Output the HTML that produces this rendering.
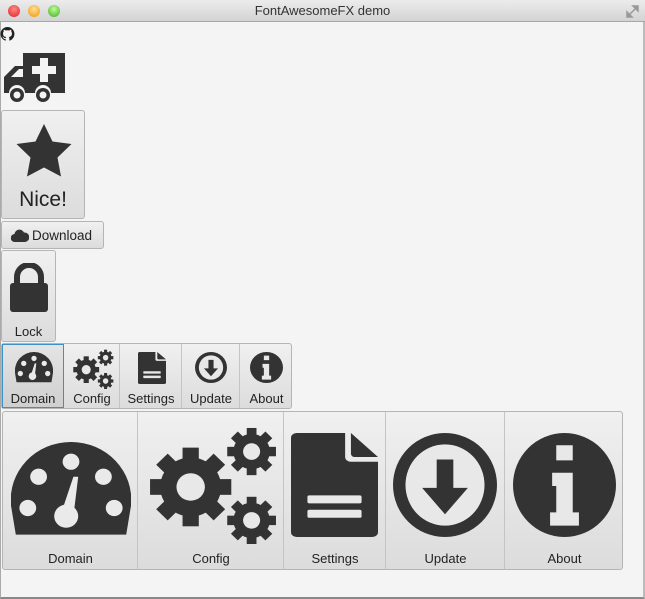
<!DOCTYPE html>
<html><head><style>
*{margin:0;padding:0;box-sizing:border-box}
body{width:645px;height:599px;background:#f4f4f4;font-family:"Liberation Sans",sans-serif;position:relative;overflow:hidden;color:#222}
.tb{position:absolute;left:0;top:0;width:645px;height:22px;background:linear-gradient(#ececec,#d3d3d3);border-bottom:1px solid #a8a8a8;text-align:center;font-size:13px;line-height:22px;color:#333}
.dot{position:absolute;top:5px;width:12px;height:12px;border-radius:50%}
.frame{position:absolute;left:0;top:22px;width:645px;height:577px;border-left:1px solid #aaa;border-right:2px solid #bbb;border-bottom:2px solid #888}
.b{position:absolute;background:linear-gradient(#f0f0f0,#dcdcdc);border:1px solid #b5b5b5;border-radius:3px;text-align:center;font-size:12px}
.lbl{position:absolute;left:0;right:0;text-align:center}
.cell{position:absolute;top:0;bottom:0;border-right:1px solid #c4c4c4}
svg{position:absolute}
</style></head><body>
<svg width="0" height="0" style="position:absolute"><defs>
<g id="cog"><circle r="30" fill="#333"/><g fill="#333"><rect x="-8" y="-40" width="16" height="80"/><rect x="-8" y="-40" width="16" height="80" transform="rotate(45)"/><rect x="-8" y="-40" width="16" height="80" transform="rotate(90)"/><rect x="-8" y="-40" width="16" height="80" transform="rotate(135)"/></g><circle r="14" fill="#e8e8e8"/></g>
<g id="gear"><use href="#cog" transform="translate(44,62)"/><use href="#cog" transform="translate(104,26) scale(.6)"/><use href="#cog" transform="translate(104,96) scale(.6)"/></g>
<g id="doc"><path fill="#333" d="M6 0h50v30a6 6 0 0 0 6 6h28v88a6 6 0 0 1-6 6H6a6 6 0 0 1-6-6V6a6 6 0 0 1 6-6z M62 0l28 30H66a4 4 0 0 1-4-4z"/><rect x="17" y="78" width="56" height="10" rx="2" fill="#e8e8e8"/><rect x="17" y="96" width="56" height="10" rx="2" fill="#e8e8e8"/></g>
<g id="dl"><ellipse cx="50" cy="55" rx="50" ry="55" fill="#333"/><ellipse cx="50" cy="55" rx="38" ry="43" fill="#e8e8e8"/><path fill="#333" d="M42 28h16v30h14L50 86 28 58h14z"/></g>
<g id="info"><ellipse cx="50" cy="55" rx="50" ry="55" fill="#333"/><path fill="#e8e8e8" d="M42 13h16v16H42z M38 42h20v42h6v14H36V84h6V56h-4z"/></g>
<g id="gauge"><path fill="#333" d="M50 0a50 50 0 0 1 50 55l-4 25H4L0 55A50 50 0 0 1 50 0z"/><g fill="#eaeaea"><circle cx="50" cy="17" r="7"/><circle cx="23" cy="30" r="7"/><circle cx="77" cy="30" r="7"/><circle cx="14" cy="57" r="7"/><circle cx="86" cy="57" r="7"/><circle cx="46" cy="64" r="10"/><path d="M41 64L52 30h4l-4 34z"/></g></g>
</defs></svg>
<div class="tb">FontAwesomeFX demo
<div class="dot" style="left:8px;background:radial-gradient(circle at 50% 35%,#f88,#d22)"></div>
<div class="dot" style="left:28px;background:radial-gradient(circle at 50% 35%,#fd9,#e90)"></div>
<div class="dot" style="left:48px;background:radial-gradient(circle at 50% 35%,#bf9,#4a2)"></div>
<svg style="left:626px;top:5px" width="13" height="13" viewBox="0 0 13 13"><path d="M7 1h5v5zM6 12H1V7z M4 9l5-5" stroke="#999" fill="#999" stroke-width="1.5"/></svg>
</div>
<div class="frame"></div>
<svg style="left:0;top:27px" width="15" height="14" viewBox="0 0 16 16"><path fill="#222" d="M8 0a8 8 0 0 0-2.5 15.6c.4 0 .5-.2.5-.4v-1.5c-2.2.5-2.7-1-2.7-1-.4-.9-.9-1.2-.9-1.2-.7-.5.1-.5.1-.5.8.1 1.2.8 1.2.8.7 1.3 1.9.9 2.3.7.1-.5.3-.9.5-1.1-1.8-.2-3.6-.9-3.6-4 0-.9.3-1.6.8-2.1-.1-.2-.4-1 .1-2.1 0 0 .7-.2 2.2.8a7.5 7.5 0 0 1 4 0c1.5-1 2.2-.8 2.2-.8.4 1.1.2 1.9.1 2.1.5.6.8 1.3.8 2.1 0 3.1-1.9 3.8-3.6 4 .3.3.6.8.6 1.5v2.2c0 .2.1.5.6.4A8 8 0 0 0 8 0z"/></svg>
<svg style="left:3px;top:51px" width="64" height="53" viewBox="0 0 64 53"><path fill="#333" d="M20 2h42v40H48a8 8 0 0 0-16 0H22a8 8 0 0 0-16 0H1V26L12 15h8z"/><path fill="#f4f4f4" d="M8 26l8-8h4v8z"/><path fill="#f4f4f4" d="M37 7h8v8h8v8h-8v8h-8v-8h-8v-8h8z"/><circle cx="14" cy="44" r="7" fill="#333"/><circle cx="14" cy="44" r="3.5" fill="#f4f4f4"/><circle cx="40" cy="44" r="7" fill="#333"/><circle cx="40" cy="44" r="3.5" fill="#f4f4f4"/></svg>
<div class="b" style="left:1px;top:110px;width:84px;height:109px">
<svg style="left:12px;top:12px" width="60" height="56" viewBox="0 0 60 56"><path fill="#333" d="M30 1l8.5 17.5 19 2.5-14 13.5 3.5 19L30 44.5 13 53.5l3.5-19L2.5 21l19-2.5z"/></svg>
<div class="lbl" style="top:77px;font-size:21px">Nice!</div></div>
<div class="b" style="left:1px;top:221px;width:103px;height:28px">
<svg style="left:9px;top:7px" width="18" height="13" viewBox="0 0 18 13"><path fill="#333" d="M4 13a4 4 0 0 1-.5-8 5 5 0 0 1 9.5-1.5A4.5 4.5 0 0 1 14 13z"/></svg>
<div class="lbl" style="left:30px;text-align:left;top:6px;font-size:13.5px">Download</div></div>
<div class="b" style="left:1px;top:250px;width:55px;height:92px">
<svg style="left:7px;top:12px" width="40" height="50" viewBox="0 0 40 50"><path d="M8 22V14a12 12 0 0 1 24 0v8" stroke="#333" stroke-width="6" fill="none"/><rect x="1" y="20" width="38" height="29" rx="3" fill="#333"/></svg>
<div class="lbl" style="top:73px;font-size:13px">Lock</div></div>
<div class="b" style="left:1px;top:343px;width:291px;height:66px;border-radius:3px">
<div class="cell" style="left:0;width:62px;background:linear-gradient(#e4e4e4,#cfcfcf);border:1px solid #3d8fc4"></div>
<div class="cell" style="left:62px;width:56px"></div>
<div class="cell" style="left:118px;width:62px"></div>
<div class="cell" style="left:180px;width:58px"></div>
<svg style="left:13px;top:8px" width="38" height="31" viewBox="0 0 100 82" preserveAspectRatio="none"><use href="#gauge"/></svg>
<svg style="left:70px;top:5px" width="42" height="40" viewBox="0 0 130 120" preserveAspectRatio="none"><use href="#gear"/></svg>
<svg style="left:136px;top:8px" width="28" height="32" viewBox="0 0 90 130" preserveAspectRatio="none"><use href="#doc"/></svg>
<svg style="left:193px;top:8px" width="32" height="31" viewBox="0 0 100 110" preserveAspectRatio="none"><use href="#dl"/></svg>
<svg style="left:248px;top:8px" width="33" height="31" viewBox="0 0 100 110" preserveAspectRatio="none"><use href="#info"/></svg>
<div class="lbl" style="left:0;width:62px;top:47px;font-size:13px">Domain</div>
<div class="lbl" style="left:62px;width:56px;top:47px;font-size:13px">Config</div>
<div class="lbl" style="left:118px;width:62px;top:47px;font-size:13px">Settings</div>
<div class="lbl" style="left:180px;width:58px;top:47px;font-size:13px">Update</div>
<div class="lbl" style="left:238px;width:53px;top:47px;font-size:13px">About</div>
</div>
<div class="b" style="left:2px;top:411px;width:621px;height:159px">
<div class="cell" style="left:0;width:135px"></div>
<div class="cell" style="left:135px;width:146px"></div>
<div class="cell" style="left:281px;width:102px"></div>
<div class="cell" style="left:383px;width:119px"></div>
<svg style="left:8px;top:30px" width="120" height="95" viewBox="0 0 100 82" preserveAspectRatio="none"><use href="#gauge"/></svg>
<svg style="left:143px;top:14px" width="132" height="118" viewBox="0 0 130 120" preserveAspectRatio="none"><use href="#gear"/></svg>
<svg style="left:288px;top:21px" width="87" height="104" viewBox="0 0 90 130" preserveAspectRatio="none"><use href="#doc"/></svg>
<svg style="left:390px;top:21px" width="104" height="104" viewBox="0 0 100 110" preserveAspectRatio="none"><use href="#dl"/></svg>
<svg style="left:510px;top:21px" width="103" height="104" viewBox="0 0 100 110" preserveAspectRatio="none"><use href="#info"/></svg>
<div class="lbl" style="left:0;width:135px;top:139px;font-size:13px">Domain</div>
<div class="lbl" style="left:135px;width:146px;top:139px;font-size:13px">Config</div>
<div class="lbl" style="left:281px;width:102px;top:139px;font-size:13px">Settings</div>
<div class="lbl" style="left:383px;width:119px;top:139px;font-size:13px">Update</div>
<div class="lbl" style="left:502px;width:119px;top:139px;font-size:13px">About</div>
</div>
</body></html>
